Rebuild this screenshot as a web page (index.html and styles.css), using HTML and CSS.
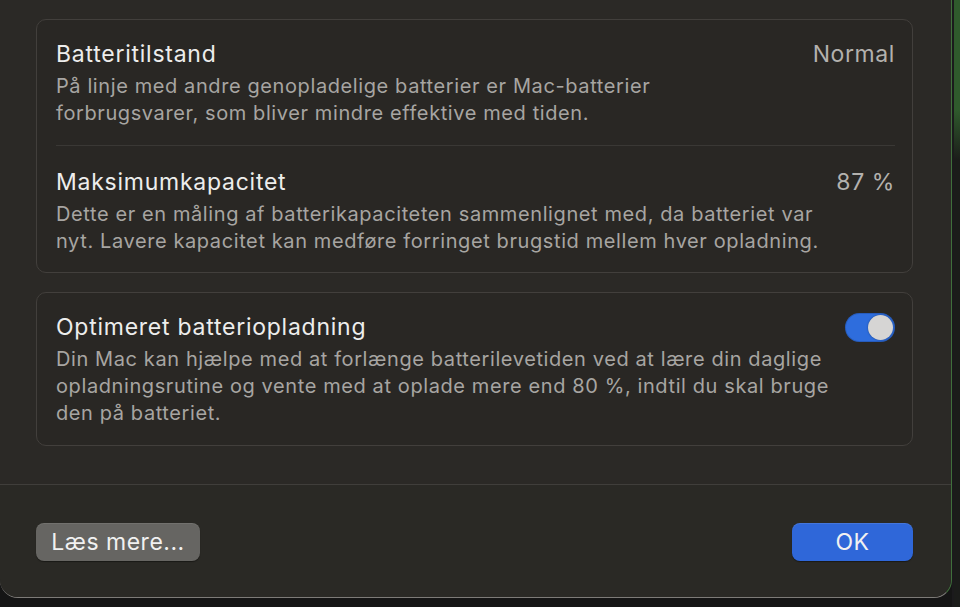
FILE: index.html
```html
<!DOCTYPE html>
<html lang="da">
<head>
<meta charset="utf-8">
<title>Batteritilstand</title>
<link rel="stylesheet" href="styles.css">
</head>
<body>
<div class="screen">
  <div class="window">
    <div class="content">
      <section class="card">
        <div class="item">
          <div class="row">
            <div class="title">Batteritilstand</div>
            <div class="value">Normal</div>
          </div>
          <p class="desc">På linje med andre genopladelige batterier er Mac-batterier<br>forbrugsvarer, som bliver mindre effektive med tiden.</p>
        </div>
        <div class="divider"></div>
        <div class="item item-second">
          <div class="row">
            <div class="title">Maksimumkapacitet</div>
            <div class="value">87 %</div>
          </div>
          <p class="desc">Dette er en måling af batterikapaciteten sammenlignet med, da batteriet var<br>nyt. Lavere kapacitet kan medføre forringet brugstid mellem hver opladning.</p>
        </div>
      </section>
      <section class="card card-opt">
        <div class="item">
          <div class="row">
            <div class="title">Optimeret batteriopladning</div>
            <div class="toggle" role="switch" aria-checked="true"><span class="knob"></span></div>
          </div>
          <p class="desc">Din Mac kan hjælpe med at forlænge batterilevetiden ved at lære din daglige<br>opladningsrutine og vente med at oplade mere end 80 %, indtil du skal bruge<br>den på batteriet.</p>
        </div>
      </section>
    </div>
    <footer class="footer">
      <button class="btn btn-secondary">Læs mere...</button>
      <button class="btn btn-primary">OK</button>
    </footer>
  </div>
  <div class="side"></div>
</div>
</body>
</html>
```

FILE: styles.css
```css
* { box-sizing: border-box; }
html, body {
  margin: 0;
  padding: 0;
  background: #151515;
  width: 960px;
  height: 607px;
  overflow: hidden;
  font-family: Inter, "Noto Sans", "Liberation Sans", sans-serif;
}
.screen {
  display: flex;
  width: 960px;
  height: 607px;
}
.window {
  width: 952px;
  height: 598px;
  background: #2b2926;
  border-right: 1px solid #3f6f3b;
  border-bottom: 1px solid #7d7b78;
  border-radius: 0 0 18px 18px;
  display: flex;
  flex-direction: column;
  flex-shrink: 0;
}
.side {
  flex: 1;
  background: linear-gradient(#2f5a2c 0, #2f5a2c 110px, #1b1c1a 160px, #1b1c1a 100%);
  border-left: 2px solid #1b1a1c;
}
.content {
  padding: 19px 38px 0 36px;
  display: flex;
  flex-direction: column;
  gap: 19px;
}
.card {
  border: 1px solid #423f3c;
  border-radius: 10px;
  background: #292724;
  padding: 0 17px 0 19px;
}
.item {
  padding: 20px 0 18px;
}
.item-second {
  padding: 22px 0 17px;
}
.card-opt .item {
  padding: 20px 0 18px;
}
.row {
  display: flex;
  justify-content: space-between;
  align-items: center;
  height: 28px;
  margin-bottom: 5px;
}
.title {
  font-size: 23px;
  color: #ededec;
  letter-spacing: 0.75px;
}
.value {
  font-size: 23px;
  color: #b3b1ae;
  letter-spacing: 0.6px;
}
.desc {
  margin: 0;
  font-size: 20px;
  line-height: 27px;
  color: #a7a5a2;
  letter-spacing: 0.6px;
  white-space: nowrap;
}
.divider {
  height: 1px;
  background: #3a3835;
}
.toggle {
  width: 50px;
  height: 29px;
  border-radius: 15px;
  background: #2e6ddd;
  display: flex;
  align-items: center;
  justify-content: flex-end;
  padding: 0 2px;
  box-shadow: inset 0 0 0 1px rgba(0,0,0,0.15);
}
.knob {
  width: 25px;
  height: 25px;
  border-radius: 50%;
  background: #d6d5d4;
  box-shadow: 0 0 2px rgba(0,0,0,0.4);
}
.footer {
  margin-top: 38px;
  border-top: 1px solid #403e3b;
  background: #2a2925;
  flex: 1;
  border-radius: 0 0 18px 18px;
  padding: 38px 38px 0 36px;
  display: flex;
  justify-content: space-between;
  align-items: flex-start;
}
.btn {
  height: 38px;
  border: none;
  border-radius: 8px;
  font-family: Inter, "Noto Sans", "Liberation Sans", sans-serif;
  font-size: 23px;
  letter-spacing: 0.5px;
  color: #f1f1f1;
  padding: 0;
  cursor: pointer;
}
.btn-secondary {
  width: 164px;
  background: #666562;
  box-shadow: 0 1px 1px rgba(0,0,0,0.4), inset 0 1px 0 rgba(255,255,255,0.08);
}
.btn-primary {
  width: 121px;
  background: #2f67d9;
  box-shadow: 0 1px 1px rgba(0,0,0,0.4), inset 0 1px 0 rgba(255,255,255,0.1);
}
```
